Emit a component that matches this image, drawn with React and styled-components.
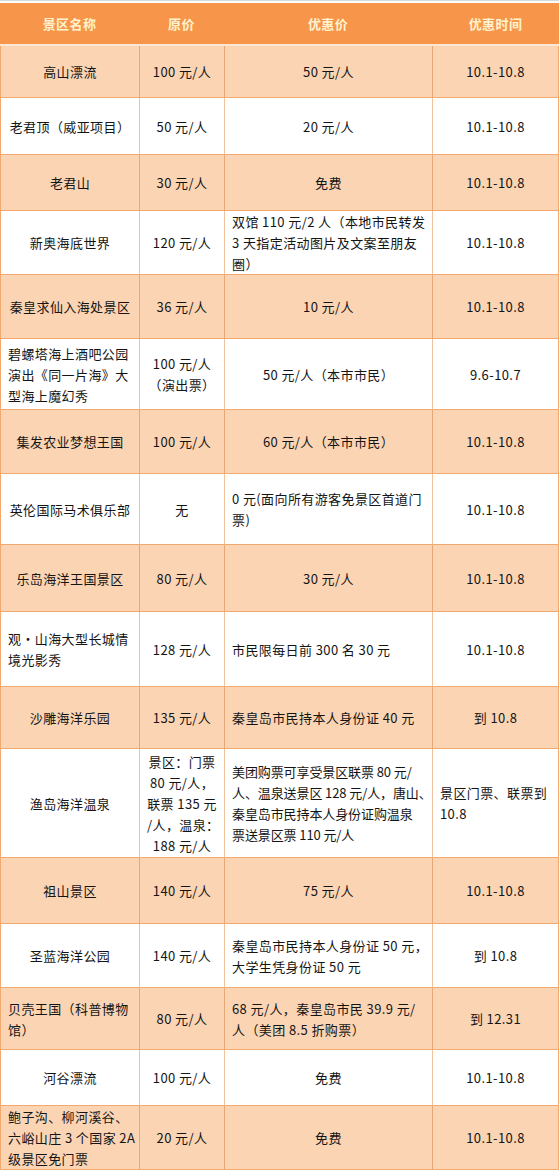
import React from 'react';
import styled, { createGlobalStyle } from 'styled-components';

const GlobalStyle = createGlobalStyle`
  html, body {
    margin: 0;
    padding: 0;
    background: #ffffff;
  }
  body {
    font-family: "Noto Sans CJK SC", "Noto Sans", sans-serif;
  }
`;

const Page = styled.div`
  width: 559px;
  padding-top: 2px;
  border-top: 1px solid #dadada;
  background: #ffffff;
`;

const Table = styled.table`
  width: 559px;
  table-layout: fixed;
  border-collapse: separate;
  border-spacing: 0;
  font-size: 13px;
  letter-spacing: 0.4px;
  color: #141414;
`;

const HeadRow = styled.tr`
  height: 43px;
  background: #f7964a;
`;

const HeadCell = styled.th`
  padding: 0;
  font-weight: 700;
  font-size: 13px;
  color: #fff3cf;
  text-align: center;
  border-bottom: 2px solid #fde6d2;
`;

const Row = styled.tr`
  height: ${p => p.$h}px;
  background: ${p => (p.$shaded ? '#fbd4b4' : '#ffffff')};
`;

const Cell = styled.td`
  padding: ${p => (p.$tight ? '0 1px 0 7px' : '0 7px')};
  letter-spacing: ${p => (p.$tight ? '-0.1px' : 'inherit')};
  line-height: 21px;
  white-space: nowrap;
  overflow: hidden;
  vertical-align: middle;
  text-align: ${p => (p.$left ? 'left' : 'center')};
  border-bottom: 1px solid #f3a86d;
  border-left: 1px solid ${p => (p.$shaded ? '#e6a877' : '#f1c19b')};
  box-sizing: border-box;

  &:first-child {
    border-left: 1px solid #f3a86d;
  }
  &:last-child {
    border-right: 1px solid #f3a86d;
  }
`;

const rows = [
  { h: 52, c: [['高山漂流'], ['100 元/人'], ['50 元/人'], ['10.1-10.8']] },
  { h: 57, c: [['老君顶（威亚项目）'], ['50 元/人'], ['20 元/人'], ['10.1-10.8']] },
  { h: 56, c: [['老君山'], ['30 元/人'], ['免费'], ['10.1-10.8']] },
  {
    h: 64,
    c: [
      ['新奥海底世界'],
      ['120 元/人'],
      ['双馆 110 元/2 人（本地市民转发', '3 天指定活动图片及文案至朋友', '圈）'],
      ['10.1-10.8'],
    ],
    left: [false, false, true, false],
  },
  { h: 64, c: [['秦皇求仙入海处景区'], ['36 元/人'], ['10 元/人'], ['10.1-10.8']] },
  {
    h: 71,
    c: [
      ['碧螺塔海上酒吧公园', '演出《同一片海》大', '型海上魔幻秀'],
      ['100 元/人', '（演出票）'],
      ['50 元/人（本市市民）'],
      ['9.6-10.7'],
    ],
    left: [true, false, false, false],
  },
  { h: 64, c: [['集发农业梦想王国'], ['100 元/人'], ['60 元/人（本市市民）'], ['10.1-10.8']] },
  {
    h: 71,
    c: [['英伦国际马术俱乐部'], ['无'], ['0 元(面向所有游客免景区首道门', '票)'], ['10.1-10.8']],
    left: [false, false, true, false],
  },
  { h: 67, c: [['乐岛海洋王国景区'], ['80 元/人'], ['30 元/人'], ['10.1-10.8']] },
  {
    h: 75,
    c: [['观·山海大型长城情', '境光影秀'], ['128 元/人'], ['市民限每日前 300 名 30 元'], ['10.1-10.8']],
    left: [true, false, true, false],
  },
  {
    h: 62,
    c: [['沙雕海洋乐园'], ['135 元/人'], ['秦皇岛市民持本人身份证 40 元'], ['到 10.8']],
    left: [false, false, true, false],
  },
  {
    h: 109,
    c: [
      ['渔岛海洋温泉'],
      ['景区：门票', '80 元/人，', '联票 135 元', '/人，温泉：', '188 元/人'],
      ['美团购票可享受景区联票 80 元/', '人、温泉送景区 128 元/人，唐山、', '秦皇岛市民持本人身份证购温泉', '票送景区票 110 元/人'],
      ['景区门票、联票到', '10.8'],
    ],
    left: [false, false, true, true],
    tight: [false, false, true, false],
  },
  { h: 66, c: [['祖山景区'], ['140 元/人'], ['75 元/人'], ['10.1-10.8']] },
  {
    h: 64,
    c: [['圣蓝海洋公园'], ['140 元/人'], ['秦皇岛市民持本人身份证 50 元，', '大学生凭身份证 50 元'], ['到 10.8']],
    left: [false, false, true, false],
  },
  {
    h: 62,
    c: [['贝壳王国（科普博物', '馆）'], ['80 元/人'], ['68 元/人，秦皇岛市民 39.9 元/', '人（美团 8.5 折购票）'], ['到 12.31']],
    left: [true, false, true, false],
  },
  { h: 56, c: [['河谷漂流'], ['100 元/人'], ['免费'], ['10.1-10.8']] },
  {
    h: 62,
    c: [['鲍子沟、柳河溪谷、', '六峪山庄 3 个国家 2A', '级景区免门票'], ['20 元/人'], ['免费'], ['10.1-10.8']],
    left: [true, false, false, false],
  },
];

const Lines = ({ lines }) =>
  lines.map((line, i) => (
    <React.Fragment key={i}>
      {i > 0 && <br />}
      {line}
    </React.Fragment>
  ));

export default function App() {
  return (
    <Page>
      <GlobalStyle />
      <Table>
        <colgroup>
          <col style={{ width: 139 }} />
          <col style={{ width: 85 }} />
          <col style={{ width: 208 }} />
          <col style={{ width: 127 }} />
        </colgroup>
        <thead>
          <HeadRow>
            <HeadCell>景区名称</HeadCell>
            <HeadCell>原价</HeadCell>
            <HeadCell>优惠价</HeadCell>
            <HeadCell>优惠时间</HeadCell>
          </HeadRow>
        </thead>
        <tbody>
          {rows.map((row, r) => {
            const shaded = r % 2 === 0;
            return (
              <Row key={r} $h={row.h} $shaded={shaded}>
                {row.c.map((lines, c) => (
                  <Cell
                    key={c}
                    $shaded={shaded}
                    $left={row.left ? row.left[c] : false}
                    $tight={row.tight ? row.tight[c] : false}
                  >
                    <Lines lines={lines} />
                  </Cell>
                ))}
              </Row>
            );
          })}
        </tbody>
      </Table>
    </Page>
  );
}
